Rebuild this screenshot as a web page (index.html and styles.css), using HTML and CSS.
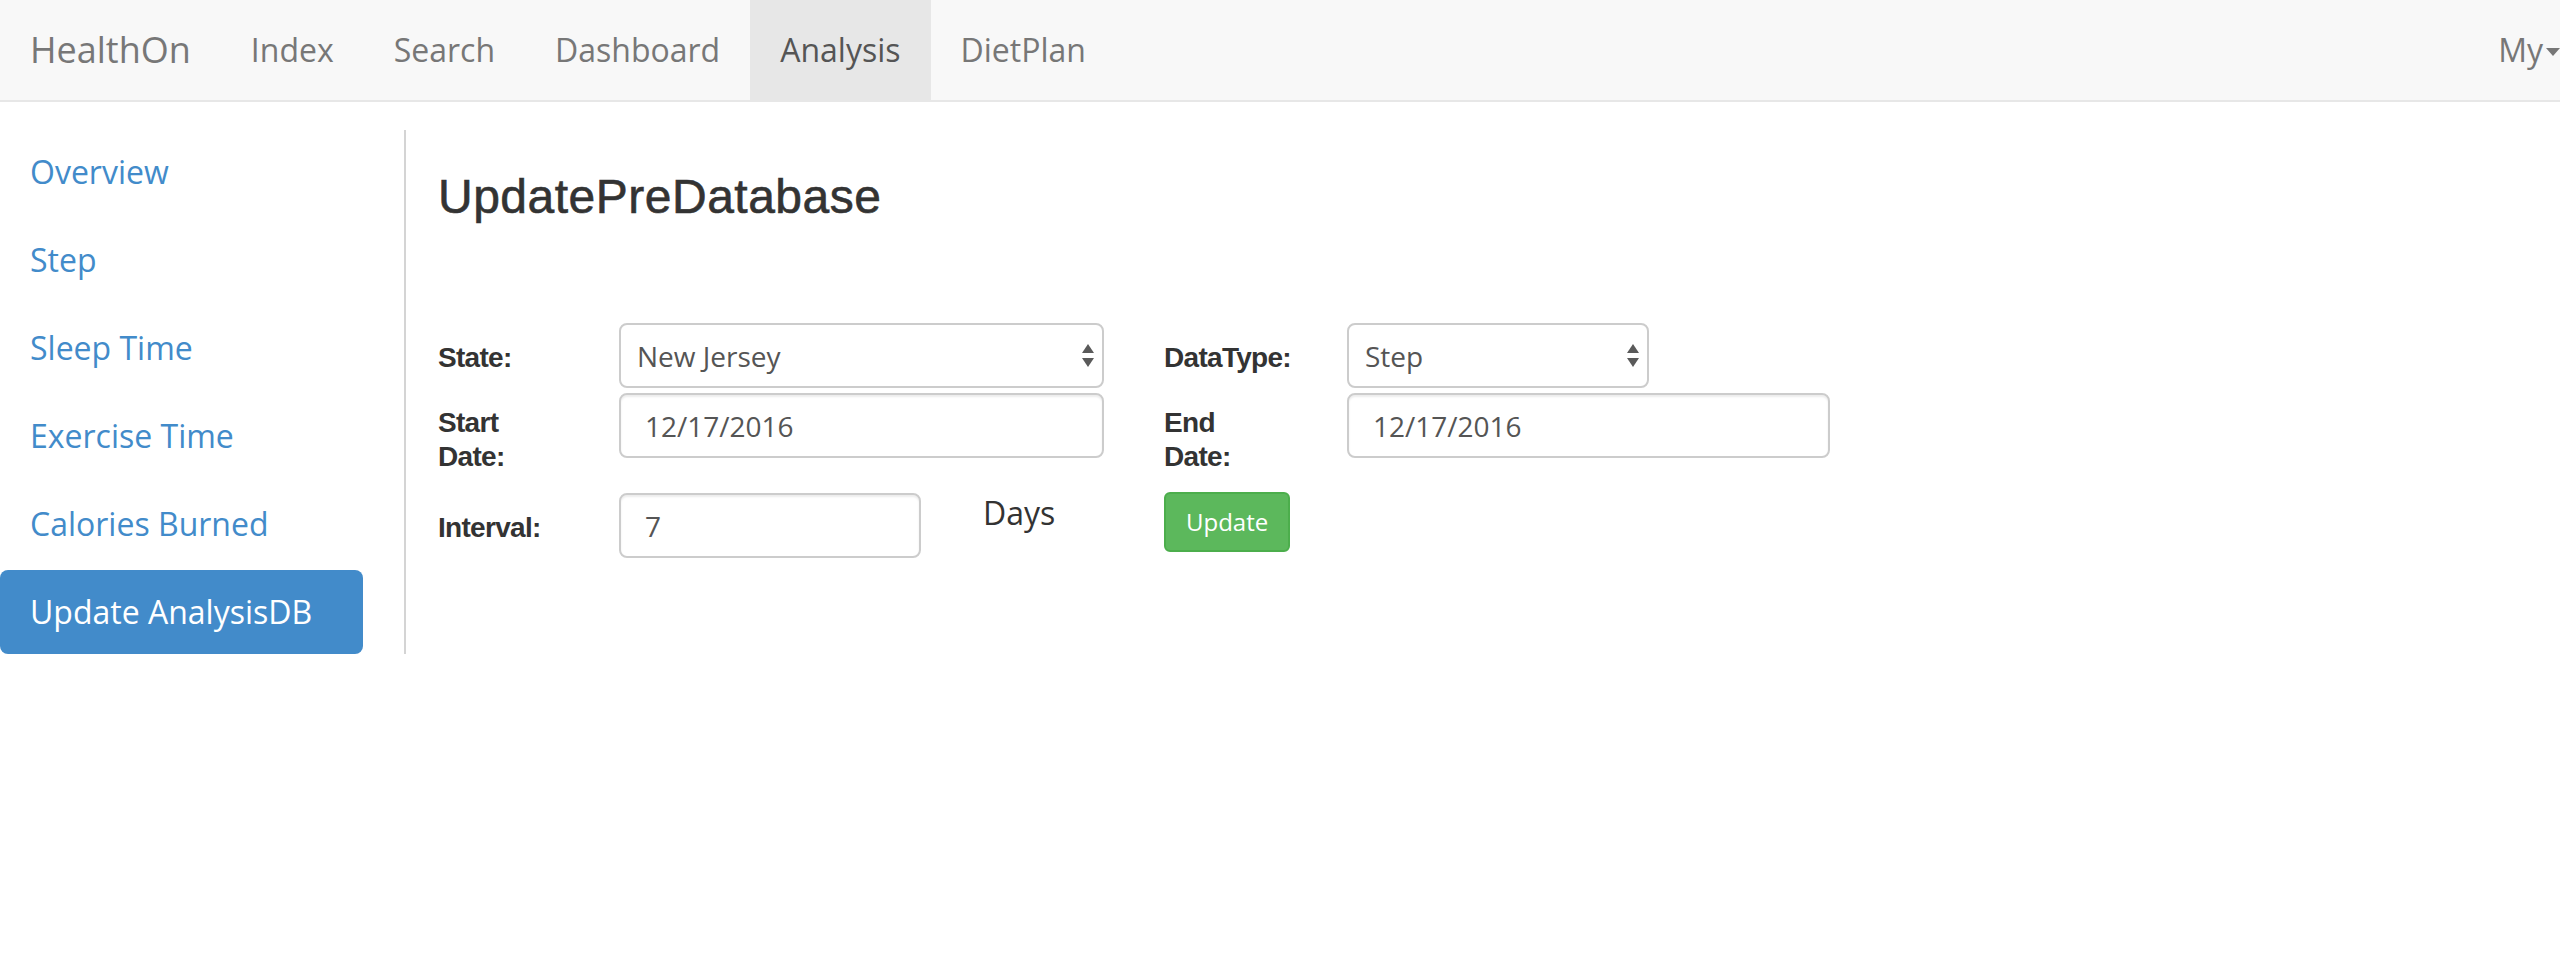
FILE: index.html
```html
<!DOCTYPE html>
<html lang="en">
<head>
<meta charset="utf-8">
<title>HealthOn - Analysis</title>
<link rel="stylesheet" href="styles.css">
</head>
<body>
<nav class="navbar">
  <a class="brand" href="#">HealthOn</a>
  <ul class="nav-links">
    <li><a href="#">Index</a></li>
    <li><a href="#">Search</a></li>
    <li><a href="#">Dashboard</a></li>
    <li class="active"><a href="#">Analysis</a></li>
    <li><a href="#">DietPlan</a></li>
  </ul>
  <div class="nav-right">
    <a class="dropdown" href="#">My<span class="caret"></span></a>
  </div>
</nav>
<div class="main">
  <aside class="sidebar">
    <ul class="pills">
      <li><a href="#">Overview</a></li>
      <li><a href="#">Step</a></li>
      <li><a href="#">Sleep Time</a></li>
      <li><a href="#">Exercise Time</a></li>
      <li><a href="#">Calories Burned</a></li>
      <li class="active"><a href="#">Update AnalysisDB</a></li>
    </ul>
  </aside>
  <section class="content">
    <h3 class="title">UpdatePreDatabase</h3>
    <form class="form-grid">
      <label class="lbl">State:</label>
      <div class="select-wrap">
        <select class="control select"><option>New Jersey</option></select>
        <svg class="arrows" width="12" height="24" viewBox="0 0 12 24"><polygon points="0,9 6,0 12,9" /><polygon points="0,14 12,14 6,23" /></svg>
      </div>
      <label class="lbl">DataType:</label>
      <div class="select-wrap narrow">
        <select class="control select"><option>Step</option></select>
        <svg class="arrows" width="12" height="24" viewBox="0 0 12 24"><polygon points="0,9 6,0 12,9" /><polygon points="0,14 12,14 6,23" /></svg>
      </div>

      <label class="lbl lbl-two">Start Date:</label>
      <input class="control input date" type="text" value="12/17/2016">
      <label class="lbl lbl-two">End Date:</label>
      <input class="control input date" type="text" value="12/17/2016">

      <label class="lbl">Interval:</label>
      <div class="interval">
        <input class="control input narrow-input" type="text" value="7">
        <span class="days">Days</span>
      </div>
      <div class="btn-cell"><button type="button" class="btn-update">Update</button></div>
      <div></div>
    </form>
  </section>
</div>
</body>
</html>
```
FILE: styles.css
```css
* { box-sizing: border-box; }

html, body {
  margin: 0;
  padding: 0;
  background: #ffffff;
  overflow: hidden;
}

body {
  font-family: "Open Sans", "Liberation Sans", sans-serif;
  color: #333333;
}

a { text-decoration: none; }

/* ---------- navbar ---------- */
.navbar {
  display: flex;
  align-items: flex-start;
  height: 102px;
  background: #f8f8f8;
  border-bottom: 2px solid #e7e7e7;
}

.brand {
  display: block;
  padding: 30px 30px;
  font-size: 36px;
  line-height: 40px;
  color: #777777;
}

.nav-links {
  display: flex;
  list-style: none;
  margin: 0;
  padding: 0;
}

.nav-links a {
  display: block;
  padding: 30px 30px;
  font-size: 32px;
  line-height: 40px;
  color: #777777;
}

.nav-links .active a {
  background: #e7e7e7;
  color: #555555;
}

.nav-right {
  margin-left: auto;
}

.dropdown {
  display: flex;
  align-items: center;
  padding: 30px 0 30px 30px;
  font-size: 32px;
  line-height: 40px;
  color: #777777;
}

.caret {
  display: inline-block;
  width: 0;
  height: 0;
  margin-left: 3px;
  margin-top: 4px;
  border-top: 8px solid #777777;
  border-left: 7px solid transparent;
  border-right: 7px solid transparent;
}

/* ---------- main ---------- */
.main {
  display: flex;
  align-items: flex-start;
  padding-top: 28px;
}

.sidebar {
  width: 406px;
  flex: none;
  border-right: 2px solid #d4d4d4;
}

.pills {
  list-style: none;
  margin: 0;
  padding: 0;
  width: 363px;
  display: flex;
  flex-direction: column;
  gap: 4px;
}

.pills a {
  display: block;
  padding: 20px 30px;
  font-size: 32px;
  line-height: 44px;
  color: #428bca;
  border-radius: 8px;
}

.pills .active a {
  background: #428bca;
  color: #ffffff;
}

.content {
  flex: 1;
  padding-left: 32px;
}

.title {
  margin: 40px 0 100px 0;
  font-family: "Liberation Sans", Arial, sans-serif;
  font-weight: 400;
  font-size: 48px;
  line-height: 53px;
  letter-spacing: 0.5px;
  color: #333333;
  -webkit-text-stroke: 0.6px #333333;
}

/* ---------- form ---------- */
.form-grid {
  display: grid;
  grid-template-columns: 121px 485px 123px 483px;
  grid-template-rows: 65px 95px 65px;
  column-gap: 60px;
  row-gap: 5px;
  align-items: start;
}

.lbl {
  display: block;
  padding-top: 18px;
  font-family: "Liberation Sans", Arial, sans-serif;
  font-weight: 700;
  font-size: 28px;
  line-height: 34px;
  letter-spacing: -0.7px;
  color: #333333;
  white-space: normal;
}

.lbl-two {
  padding-top: 13px;
}

.control {
  display: block;
  width: 100%;
  height: 65px;
  border: 2px solid #cccccc;
  border-radius: 8px;
  background: #ffffff;
  font-family: "Open Sans", "Liberation Sans", sans-serif;
  font-size: 28px;
  color: #555555;
  box-shadow: inset 0 2px 2px rgba(0, 0, 0, 0.075);
  outline: none;
}

.input {
  padding: 0 24px;
}

.select {
  -webkit-appearance: none;
  -moz-appearance: none;
  appearance: none;
  padding: 0 40px 0 16px;
  box-shadow: none;
}

.select-wrap {
  position: relative;
}

.select-wrap.narrow {
  width: 302px;
}

.arrows {
  position: absolute;
  right: 10px;
  top: 21px;
  fill: #5a5a5a;
}

.interval {
  display: flex;
  align-items: flex-start;
}

.narrow-input {
  width: 302px;
  flex: none;
}

.days {
  margin-left: 62px;
  margin-top: -2px;
  font-size: 32px;
  line-height: 44px;
  color: #333333;
}

.btn-cell {
  padding-top: 0;
}

.btn-update {
  display: block;
  margin-top: -1px;
  padding: 10px 20px;
  font-family: "Open Sans", "Liberation Sans", sans-serif;
  font-size: 24px;
  line-height: 36px;
  color: #ffffff;
  background: #5cb85c;
  border: 2px solid #4cae4c;
  border-radius: 6px;
  cursor: pointer;
}
```
